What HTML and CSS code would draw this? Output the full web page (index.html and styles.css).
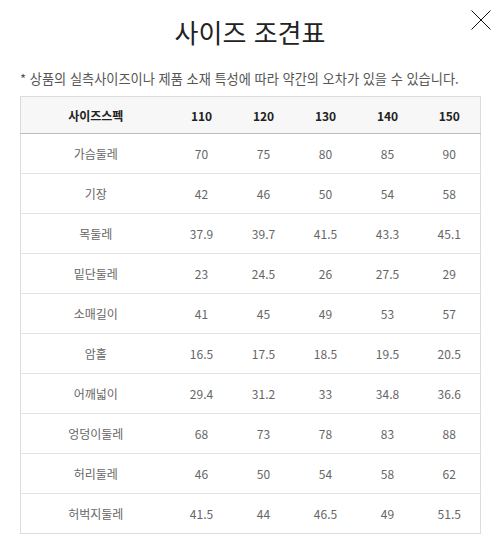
FILE: index.html
```html
<!DOCTYPE html>
<html lang="ko">
<head>
<meta charset="utf-8">
<title>사이즈 조견표</title>
<link rel="stylesheet" href="styles.css">
</head>
<body>
<div class="popup">
  <h1 class="title">사이즈 조견표</h1>
  <button class="close" aria-label="닫기">
    <svg width="20" height="20" viewBox="0 0 20 20"><path d="M0.5 0.5L19.5 19.5M19.5 0.5L0.5 19.5" stroke="#111" stroke-width="1" fill="none"/></svg>
  </button>
  <p class="note">* 상품의 실측사이즈이나 제품 소재 특성에 따라 약간의 오차가 있을 수 있습니다.</p>
  <table class="size-table">
    <colgroup>
      <col class="col-name"><col class="col-size"><col class="col-size"><col class="col-size"><col class="col-size"><col class="col-size">
    </colgroup>
    <thead>
      <tr><th>사이즈스펙</th><th>110</th><th>120</th><th>130</th><th>140</th><th>150</th></tr>
    </thead>
    <tbody>
      <tr><td>가슴둘레</td><td>70</td><td>75</td><td>80</td><td>85</td><td>90</td></tr>
      <tr><td>기장</td><td>42</td><td>46</td><td>50</td><td>54</td><td>58</td></tr>
      <tr><td>목둘레</td><td>37.9</td><td>39.7</td><td>41.5</td><td>43.3</td><td>45.1</td></tr>
      <tr><td>밑단둘레</td><td>23</td><td>24.5</td><td>26</td><td>27.5</td><td>29</td></tr>
      <tr><td>소매길이</td><td>41</td><td>45</td><td>49</td><td>53</td><td>57</td></tr>
      <tr><td>암홀</td><td>16.5</td><td>17.5</td><td>18.5</td><td>19.5</td><td>20.5</td></tr>
      <tr><td>어깨넓이</td><td>29.4</td><td>31.2</td><td>33</td><td>34.8</td><td>36.6</td></tr>
      <tr><td>엉덩이둘레</td><td>68</td><td>73</td><td>78</td><td>83</td><td>88</td></tr>
      <tr><td>허리둘레</td><td>46</td><td>50</td><td>54</td><td>58</td><td>62</td></tr>
      <tr><td>허벅지둘레</td><td>41.5</td><td>44</td><td>46.5</td><td>49</td><td>51.5</td></tr>
    </tbody>
  </table>
</div>
</body>
</html>
```
FILE: styles.css
```css
html, body {
  margin: 0;
  padding: 0;
  background: #fff;
}
body {
  font-family: "Noto Sans CJK KR", "Noto Sans", sans-serif;
  color: #333;
}
.popup {
  position: relative;
  padding: 0 23px 0 20px;
}
.title {
  margin: 0;
  padding-top: 16px;
  font-size: 26px;
  line-height: 32px;
  font-weight: 400;
  text-align: center;
  color: #222;
}
.close {
  position: absolute;
  top: 10px;
  left: 471px;
  width: 20px;
  height: 20px;
  padding: 0;
  border: 0;
  background: none;
}
.close svg {
  display: block;
}
.note {
  margin: 22px 0 0;
  font-size: 13.2px;
  line-height: 18px;
  color: #555;
  white-space: nowrap;
}
.size-table {
  margin-top: 8px;
  width: 460px;
  border-collapse: collapse;
  table-layout: fixed;
  border: 1px solid #dcdcdc;
  font-size: 12px;
}
.col-name { width: 150px; }
.col-size { width: 62px; }
.size-table th {
  height: 36px;
  padding: 0;
  background: #f7f7f7;
  border-bottom: 1px solid #bdbdbd;
  font-weight: 700;
  color: #222;
  text-align: center;
}
.size-table td {
  height: 39px;
  padding: 0;
  border-top: 1px solid #e3e3e3;
  color: #666;
  text-align: center;
}
.size-table tbody tr:first-child td {
  border-top: 0;
}
```
